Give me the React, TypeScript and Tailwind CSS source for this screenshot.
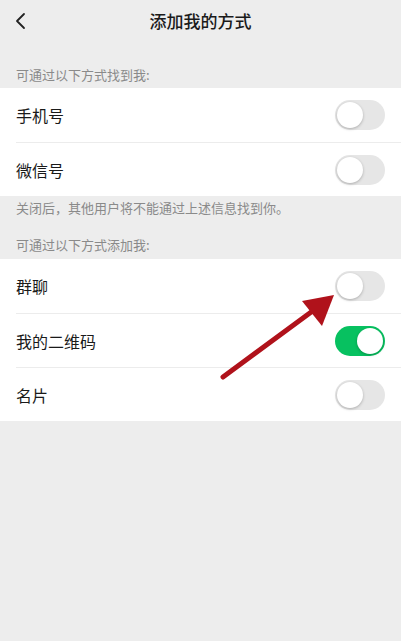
import { useState } from "react";

type Item = { label: string; on: boolean };

function Toggle({ on, onClick }: { on: boolean; onClick: () => void }) {
  return (
    <button
      type="button"
      onClick={onClick}
      className={`relative h-[30px] w-[50px] shrink-0 rounded-full ${
        on ? "bg-[#07c160]" : "bg-[#e6e6e6]"
      }`}
    >
      <span
        className={`absolute top-[2px] h-[26px] w-[26px] rounded-full bg-white shadow-[0_1px_3px_rgba(0,0,0,0.25)] ${
          on ? "left-[22px]" : "left-[2px]"
        }`}
      />
    </button>
  );
}

function Group({ items }: { items: Item[] }) {
  const [state, setState] = useState(items.map((i) => i.on));
  return (
    <div className="bg-white">
      {items.map((it, i) => (
        <div key={it.label} className="pl-4">
          <div
            className={`flex h-[54px] items-center justify-between pr-4 ${
              i > 0 ? "border-t border-[#ececec]" : ""
            }`}
          >
            <span className="text-[16px] text-[#1a1a1a]">{it.label}</span>
            <Toggle
              on={state[i]}
              onClick={() => setState((s) => s.map((v, j) => (j === i ? !v : v)))}
            />
          </div>
        </div>
      ))}
    </div>
  );
}

export default function App() {
  return (
    <div
      className="relative min-h-[641px] w-full bg-[#ededed]"
      style={{ fontFamily: '"Noto Sans CJK SC", "Noto Sans", sans-serif' }}
    >
      <div className="relative flex h-[42px] items-center justify-center">
        <svg
          className="absolute left-[14px] top-[12px]"
          width="14"
          height="18"
          viewBox="0 0 14 18"
          fill="none"
        >
          <path d="M10 2 L3 9 L10 16" stroke="#222" strokeWidth="1.8" strokeLinecap="round" strokeLinejoin="round" />
        </svg>
        <span className="text-[17px] font-medium text-[#1a1a1a]">添加我的方式</span>
      </div>

      <div className="px-4 pb-[4px] pt-[24px] text-[13px] leading-[18px] text-[#8a8a8a]">可通过以下方式找到我:</div>
      <Group
        items={[
          { label: "手机号", on: false },
          { label: "微信号", on: false },
        ]}
      />
      <div className="px-4 pt-[3px] text-[13px] leading-[18px] text-[#8a8a8a]">关闭后，其他用户将不能通过上述信息找到你。</div>

      <div className="px-4 pb-[5px] pt-[19px] text-[13px] leading-[18px] text-[#8a8a8a]">可通过以下方式添加我:</div>
      <Group
        items={[
          { label: "群聊", on: false },
          { label: "我的二维码", on: true },
          { label: "名片", on: false },
        ]}
      />

      <svg className="pointer-events-none absolute left-0 top-0" width="401" height="641">
        <line x1="223" y1="377" x2="318" y2="307" stroke="#b0121b" strokeWidth="5" strokeLinecap="round" />
        <polygon points="334,295 302,301 322,326" fill="#b0121b" />
      </svg>
    </div>
  );
}
